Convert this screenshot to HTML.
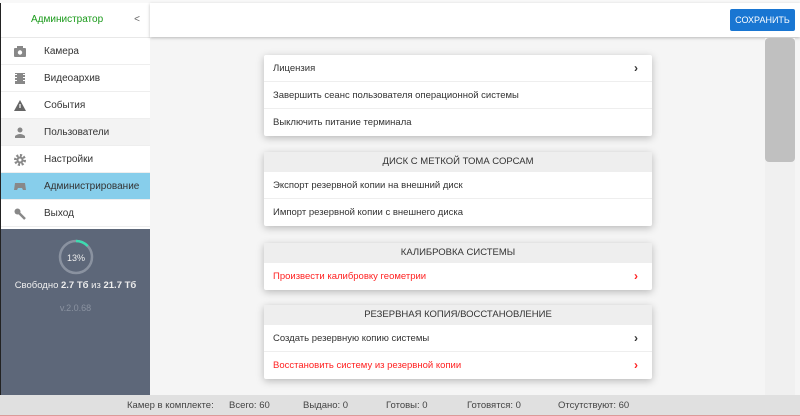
<!DOCTYPE html><html><head><meta charset="utf-8"><style>
*{box-sizing:border-box;margin:0;padding:0}
body{width:800px;height:416px;overflow:hidden;background:#f5f5f5;font-family:"Liberation Sans",sans-serif;font-size:10px;color:#333;position:relative}
.side{position:absolute;left:0;top:3px;width:150px;height:392px;background:#fff;border-left:1px solid #222}
.top{position:absolute;left:0;top:0;width:800px;height:3px;background:#f8f8f8}
.adm{height:35px;line-height:34px;color:#1a9a1a;padding-left:30px;position:relative;border-bottom:1px solid #e8e8e8}
.adm span{position:absolute;right:10px;color:#666}
.mi{height:27px;line-height:27px;padding-left:43px;border-bottom:1px solid #eee;position:relative}
.mi svg{position:absolute;left:13px;top:8px}
.dark{position:absolute;left:0;top:225px;width:149px;height:167px;background:#5d6779;color:#eee;text-align:center}
.hdr{position:absolute;left:150px;top:3px;width:650px;height:34px;background:#fff;box-shadow:0 1px 3px rgba(0,0,0,.25)}
.btn{position:absolute;left:730px;top:9px;width:65px;height:22px;background:#1976d2;color:#fff;border-radius:2px;text-align:center;line-height:22px;font-size:9px}
.card{position:absolute;left:264px;width:388px;background:#fff;border-radius:2px;box-shadow:0 2px 8px rgba(0,0,0,.25)}
.ch{height:20px;line-height:20px;background:#eee;text-align:center;font-size:9.5px;color:#333}
.r{height:27px;line-height:27px;padding-left:9px;border-bottom:1px solid #eee;position:relative;font-size:9.5px}
.r:last-child{border-bottom:0}
.red{color:#f22}
.ar{position:absolute;right:14px;top:0;font-weight:bold;font-size:12px}
.sb{position:absolute;left:765px;top:38px;width:30px;height:357px;background:#f0f0f0}
.th{position:absolute;left:765px;top:38px;width:30px;height:124px;background:#c0c0c0;border-radius:4px}
.bot{position:absolute;left:0;top:395px;width:800px;height:21px;background:#e0e0e0;border-bottom:1px solid #d99;font-size:9.5px;color:#444}
.bot span{position:absolute;top:5px}
</style></head><body>
<div class="top"></div>
<div class="side">
<div class="adm">Администратор<span>&lt;</span></div>
<div class="mi"><svg width="12" height="11"><rect x="0" y="2" width="12" height="9" rx="1" fill="#888"/><rect x="3" y="0" width="6" height="3" fill="#888"/><circle cx="6" cy="6.5" r="2.2" fill="#fff"/></svg>Камера</div>
<div class="mi"><svg width="12" height="11"><rect x="1" y="0" width="10" height="11" fill="#888"/><g fill="#fff"><rect x="1" y="1" width="2" height="1"/><rect x="1" y="4" width="2" height="1"/><rect x="1" y="7" width="2" height="1"/><rect x="9" y="1" width="2" height="1"/><rect x="9" y="4" width="2" height="1"/><rect x="9" y="7" width="2" height="1"/></g></svg>Видеоархив</div>
<div class="mi"><svg width="12" height="11"><path d="M6 0L12 11H0z" fill="#666"/><rect x="5.4" y="4" width="1.2" height="4" fill="#fff"/></svg>События</div>
<div class="mi" style="background:#f3f3f3"><svg width="12" height="11"><circle cx="6" cy="3" r="2.5" fill="#888"/><path d="M1 11v-2q5-4 10 0v2z" fill="#888"/></svg>Пользователи</div>
<div class="mi"><svg width="12" height="12"><circle cx="6" cy="6" r="4.5" fill="none" stroke="#888" stroke-width="3" stroke-dasharray="2 1.5"/><circle cx="6" cy="6" r="3.5" fill="#888"/><circle cx="6" cy="6" r="1.5" fill="#fff"/></svg>Настройки</div>
<div class="mi" style="background:#87ceeb"><svg width="12" height="11"><path d="M1 2h10l1 7h-3l-1-2H4L3 9H0z" fill="#888"/></svg>Администрирование</div>
<div class="mi"><svg width="12" height="12"><circle cx="3.5" cy="3.5" r="3" fill="#888"/><path d="M5 5l6 6" stroke="#888" stroke-width="2.5"/></svg>Выход</div>
<div class="dark" style="top:226px">
<svg width="36" height="36" style="margin-top:10px"><circle cx="18" cy="18" r="16" fill="none" stroke="#8a92a0" stroke-width="2.5"/><circle cx="18" cy="18" r="16" fill="none" stroke="#3ddbb0" stroke-width="2.5" stroke-dasharray="13 200" transform="rotate(-90 18 18)"/><text x="18" y="22" fill="#eee" font-size="9" text-anchor="middle" font-family="Liberation Sans">13%</text></svg>
<div style="margin-top:2px;font-size:9.5px">Свободно <b>2.7 Тб</b> из <b>21.7 Тб</b></div>
<div style="margin-top:12px;color:#8a92a0;font-size:9px">v.2.0.68</div>
</div>
</div>
<div class="hdr"></div><div class="btn">СОХРАНИТЬ</div>
<div class="sb"></div><div class="th"></div>
<div class="card" style="top:55px"><div class="r">Лицензия<span class="ar">›</span></div><div class="r">Завершить сеанс пользователя операционной системы</div><div class="r">Выключить питание терминала</div></div>
<div class="card" style="top:152px"><div class="ch">ДИСК С МЕТКОЙ ТОМА СОРСАМ</div><div class="r">Экспорт резервной копии на внешний диск</div><div class="r">Импорт резервной копии с внешнего диска</div></div>
<div class="card" style="top:243px"><div class="ch">КАЛИБРОВКА СИСТЕМЫ</div><div class="r red">Произвести калибровку геометрии<span class="ar">›</span></div></div>
<div class="card" style="top:305px"><div class="ch">РЕЗЕРВНАЯ КОПИЯ/ВОССТАНОВЛЕНИЕ</div><div class="r">Создать резервную копию системы<span class="ar" style="color:#333">›</span></div><div class="r red">Восстановить систему из резервной копии<span class="ar">›</span></div></div>
<div class="bot"><span style="left:127px">Камер в комплекте:</span><span style="left:229px">Всего: 60</span><span style="left:303px">Выдано: 0</span><span style="left:386px">Готовы: 0</span><span style="left:467px">Готовятся: 0</span><span style="left:558px">Отсутствуют: 60</span></div>
</body></html>
